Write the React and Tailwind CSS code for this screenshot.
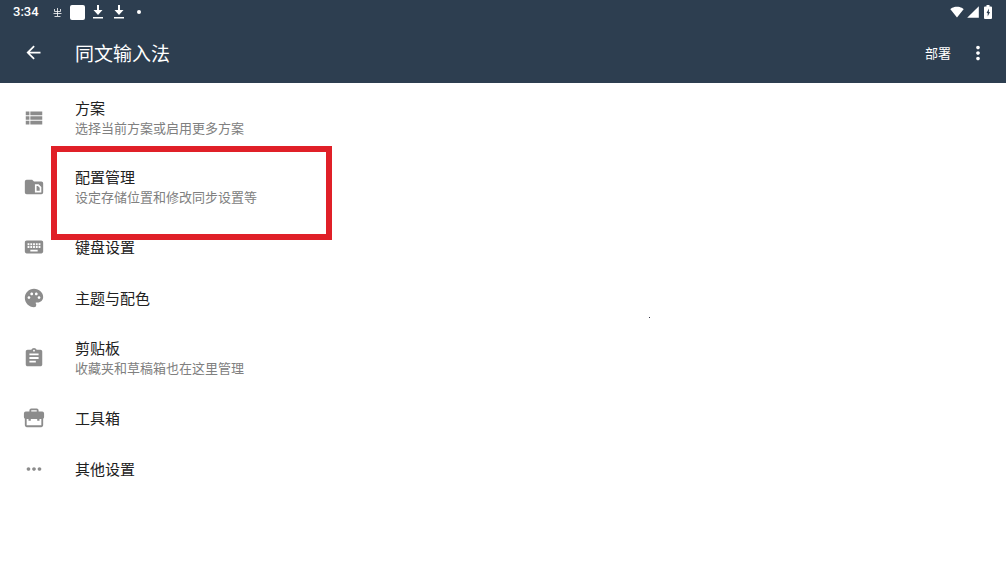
import React from 'react';
import {
    MdArrowBack,
    MdKeyboard,
    MdMoreHoriz,
    MdMoreVert,
    MdPalette,
    MdSignalCellular4Bar,
    MdSignalWifi4Bar,
    MdViewList,
} from 'react-icons/md';

function FolderFileIcon({ className }) {
    return (
        <svg viewBox="0 0 24 24" fill="currentColor" className={className} aria-hidden="true">
            <path
                fillRule="evenodd"
                d="M4 4h6l2 2h8a2 2 0 0 1 2 2v10a2 2 0 0 1-2 2H4a2 2 0 0 1-2-2V6a2 2 0 0 1 2-2zM13 9v9h7v-6l-3-3zM14.8 10.800h1.500l1.900 1.900v3.500h-3.400z"
            />
        </svg>
    );
}

function ClipboardIcon({ className }) {
    return (
        <svg viewBox="0 0 24 24" fill="currentColor" className={className} aria-hidden="true">
            <path d="M19 3h-4.18C14.4 1.84 13.3 1 12 1c-1.3 0-2.4.84-2.82 2H5c-1.1 0-2 .9-2 2v14c0 1.1.9 2 2 2h14c1.1 0 2-.9 2-2V5c0-1.1-.9-2-2-2zm-7 0c.55 0 1 .45 1 1s-.45 1-1 1-1-.45-1-1 .45-1 1-1zm2 14H7v-2h7v2zm3-4H7v-2h10v2zm0-4H7V7h10v2z" />
        </svg>
    );
}

function ToolboxIcon({ className }) {
    return (
        <svg viewBox="0 0 24 24" fill="currentColor" className={className} aria-hidden="true">
            <path
                fillRule="evenodd"
                d="M9 1.5h6a2 2 0 0 1 2 2V5h4a2 2 0 0 1 2 2v4a2 2 0 0 1-1 1.7V20a2 2 0 0 1-2 2H4a2 2 0 0 1-2-2v-7.300A2 2 0 0 1 1 11V7a2 2 0 0 1 2-2h4V3.500a2 2 0 0 1 2-2zM9 3.500V5h6V3.500zM4 13v7h16v-7h-2v2h-2.500v-2h-7v2H6v-2z"
            />
        </svg>
    );
}

function DownloadDoneIcon() {
    return (
        <svg viewBox="0 0 12 14" fill="currentColor" className="h-3.5 w-3" aria-hidden="true">
            <path d="M5 0h2v5h3.500L6 10 1.500 5H5zM1 12h10v1.500H1z" />
        </svg>
    );
}

function BatteryIcon() {
    return (
        <svg viewBox="0 0 8 14" className="h-3.5 w-2" aria-hidden="true">
            <path fill="currentColor" d="M2.500 0h3v1.500H7a1 1 0 0 1 1 1V13a1 1 0 0 1-1 1H1a1 1 0 0 1-1-1V2.500a1 1 0 0 1 1-1h1.500z" />
            <path fill="#2d3e50" d="M5 3.500 2.500 8h1.200V11.500L6 7H4.800z" />
        </svg>
    );
}

const settings = [
    { icon: MdViewList, title: '方案', summary: '选择当前方案或启用更多方案' },
    { icon: FolderFileIcon, title: '配置管理', summary: '设定存储位置和修改同步设置等', marked: true },
    { icon: MdKeyboard, title: '键盘设置' },
    { icon: MdPalette, title: '主题与配色' },
    { icon: ClipboardIcon, title: '剪贴板', summary: '收藏夹和草稿箱也在这里管理' },
    { icon: ToolboxIcon, title: '工具箱' },
    { icon: MdMoreHoriz, title: '其他设置' },
];

function StatusBar() {
    return (
        <div className="flex h-6 items-center justify-between pr-3.5 pl-[13px]">
            <div className="flex items-center">
                <span className="w-10 font-['Roboto',sans-serif] text-[13px] leading-4 font-medium">3:34</span>
                <svg viewBox="0 0 9 9" className="mr-2 h-[9px] w-[9px]" fill="none" stroke="currentColor" aria-hidden="true">
                    <path d="M4.500 0v8M1.500 1v2.500h6V1M0.500 5.500h8M1.500 8.500h6" strokeWidth="0.8" />
                </svg>
                <span className="mr-[7px] h-[15px] w-[15px] rounded-xs bg-white" />
                <span className="flex gap-[9px]">
                    <DownloadDoneIcon />
                    <DownloadDoneIcon />
                </span>
                <span className="ml-3 h-1 w-1 rounded-full bg-white" />
            </div>
            <div className="flex items-center">
                <MdSignalWifi4Bar className="h-3.5 w-3.5" />
                <MdSignalCellular4Bar className="mr-1 ml-0.5 h-3.5 w-3.5" />
                <BatteryIcon />
            </div>
        </div>
    );
}

export default function App() {
    return (
        <div className="min-h-screen bg-white font-['Noto_Sans_CJK_SC',sans-serif]">
            <header className="bg-[#2d3e50] text-white">
                <StatusBar />
                <div className="flex h-[59px] items-center pr-[17px] pb-0.5 pl-[23px]">
                    <button type="button" aria-label="返回" className="mr-[31px]">
                        <MdArrowBack className="h-[21px] w-[21px]" />
                    </button>
                    <h1 className="flex-1 text-[19px] leading-[26px]">同文输入法</h1>
                    <button type="button" className="mr-4 text-[13px] leading-5">部署</button>
                    <button type="button" aria-label="更多选项">
                        <MdMoreVert className="h-[22px] w-[22px]" />
                    </button>
                </div>
            </header>

            <main>
                <ul>
                    {settings.map((item) => (
                        <li key={item.title} className="relative">
                            <button type="button" className="flex min-h-[51px] w-full items-center py-3.5 pl-[23px] text-left">
                                <item.icon className="mr-[30px] h-[22px] w-[22px] shrink-0 text-[#8c8c8c]" />
                                <span>
                                    <span className="block text-[15px] leading-[21px] text-[#212121]">{item.title}</span>
                                    {item.summary && (
                                        <span className="block text-[13px] leading-5 text-[#808080]">{item.summary}</span>
                                    )}
                                </span>
                            </button>
                            {/* red callout frame, spills a little into the next row */}
                            {item.marked && (
                                <span className="pointer-events-none absolute -top-1.5 left-[51px] z-10 h-[94px] w-[281px] border-6 border-[#e02028]" />
                            )}
                        </li>
                    ))}
                </ul>
            </main>

            {/* pointer dot */}
            <span className="pointer-events-none absolute top-[317px] left-[649px] h-px w-px bg-[#333344]" />
        </div>
    );
}
